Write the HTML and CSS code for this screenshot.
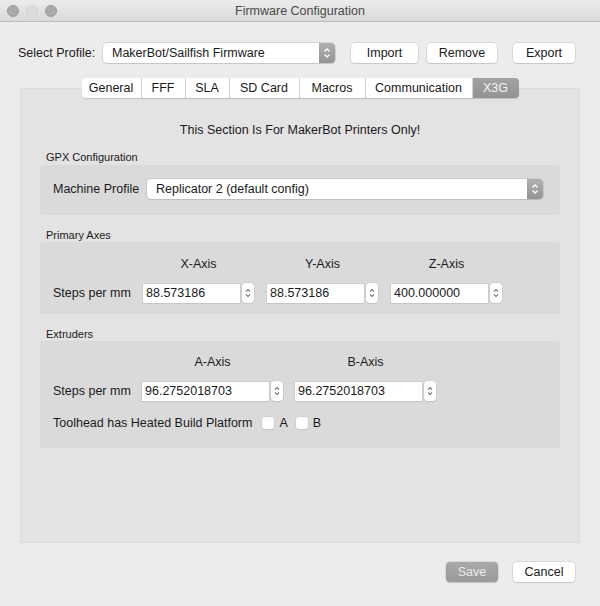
FILE: index.html
```html
<!DOCTYPE html>
<html>
<head>
<meta charset="utf-8">
<title>Firmware Configuration</title>
<link rel="stylesheet" href="styles.css">
</head>
<body>
<div class="window">
  <header class="titlebar">
    <div class="lights"><span class="light"></span><span class="light mid"></span><span class="light"></span></div>
    <div class="title">Firmware Configuration</div>
    <div></div>
  </header>

  <div class="profile-row">
    <span class="lbl">Select Profile:</span>
    <div class="combo profile-combo">
      <span class="combo-text">MakerBot/Sailfish Firmware</span>
      <span class="combo-btn"><svg width="8" height="12" viewBox="0 0 8 12"><path d="M1.5 4.5 L4 2 L6.5 4.5 M1.5 7.5 L4 10 L6.5 7.5" fill="none" stroke="#fff" stroke-width="1.3"/></svg></span>
    </div>
    <button class="btn import">Import</button>
    <button class="btn remove">Remove</button>
    <button class="btn export">Export</button>
  </div>

  <div class="panel">
    <div class="tabs">
      <span class="tab">General</span>
      <span class="tab">FFF</span>
      <span class="tab">SLA</span>
      <span class="tab">SD Card</span>
      <span class="tab">Macros</span>
      <span class="tab">Communication</span>
      <span class="tab active">X3G</span>
    </div>

    <p class="note">This Section Is For MakerBot Printers Only!</p>

    <div class="group-title first">GPX Configuration</div>
    <div class="group gpx">
      <span class="lbl">Machine Profile</span>
      <div class="combo machine-combo">
        <span class="combo-text">Replicator 2 (default config)</span>
        <span class="combo-btn"><svg width="8" height="12" viewBox="0 0 8 12"><path d="M1.5 4.5 L4 2 L6.5 4.5 M1.5 7.5 L4 10 L6.5 7.5" fill="none" stroke="#fff" stroke-width="1.3"/></svg></span>
      </div>
    </div>

    <div class="group-title">Primary Axes</div>
    <div class="group axes primary">
      <span></span>
      <span class="head">X-Axis</span>
      <span class="head">Y-Axis</span>
      <span class="head">Z-Axis</span>
      <span class="lbl">Steps per mm</span>
      <div class="spin"><span class="field">88.573186</span><span class="stepper"><svg width="8" height="12" viewBox="0 0 8 12"><path d="M2 4.5 L4 2.5 L6 4.5 M2 7.5 L4 9.5 L6 7.5" fill="none" stroke="#777" stroke-width="1.1"/></svg></span></div>
      <div class="spin"><span class="field">88.573186</span><span class="stepper"><svg width="8" height="12" viewBox="0 0 8 12"><path d="M2 4.5 L4 2.5 L6 4.5 M2 7.5 L4 9.5 L6 7.5" fill="none" stroke="#777" stroke-width="1.1"/></svg></span></div>
      <div class="spin"><span class="field">400.000000</span><span class="stepper"><svg width="8" height="12" viewBox="0 0 8 12"><path d="M2 4.5 L4 2.5 L6 4.5 M2 7.5 L4 9.5 L6 7.5" fill="none" stroke="#777" stroke-width="1.1"/></svg></span></div>
    </div>

    <div class="group-title">Extruders</div>
    <div class="group extruders">
      <div class="axes ext">
        <span></span>
        <span class="head">A-Axis</span>
        <span class="head">B-Axis</span>
        <span class="lbl">Steps per mm</span>
        <div class="spin"><span class="field">96.2752018703</span><span class="stepper"><svg width="8" height="12" viewBox="0 0 8 12"><path d="M2 4.5 L4 2.5 L6 4.5 M2 7.5 L4 9.5 L6 7.5" fill="none" stroke="#777" stroke-width="1.1"/></svg></span></div>
        <div class="spin"><span class="field">96.2752018703</span><span class="stepper"><svg width="8" height="12" viewBox="0 0 8 12"><path d="M2 4.5 L4 2.5 L6 4.5 M2 7.5 L4 9.5 L6 7.5" fill="none" stroke="#777" stroke-width="1.1"/></svg></span></div>
      </div>
      <div class="check-row">
        <span class="lbl">Toolhead has Heated Build Platform</span>
        <span class="check"></span><span class="ck-lbl">A</span>
        <span class="check"></span><span class="ck-lbl">B</span>
      </div>
    </div>
  </div>

  <div class="footer">
    <button class="btn save">Save</button>
    <button class="btn cancel">Cancel</button>
  </div>
</div>
</body>
</html>
```

FILE: styles.css
```css
* { box-sizing: border-box; }
html, body { margin: 0; padding: 0; }
body {
  background: #ececec;
  font-family: "Liberation Sans", Arial, sans-serif;
  font-size: 12.5px;
  color: #1a1a1a;
  width: 600px;
  height: 606px;
  overflow: hidden;
}
.window { width: 600px; height: 606px; }
.lbl { white-space: nowrap; }

.titlebar {
  height: 22px;
  display: grid;
  grid-template-columns: 1fr auto 1fr;
  align-items: center;
  background: linear-gradient(#ececec, #d9d9d9);
  border-bottom: 1px solid #bdbdbd;
}
.lights { display: flex; gap: 7px; padding-left: 7px; }
.light {
  width: 12px; height: 12px; border-radius: 50%;
  background: #a9a9a9;
  border: 1px solid #9a9a9a;
}
.light.mid { background: #dcdcdc; border-color: #d2d2d2; }
.title { color: #4a4a4a; font-size: 12.5px; }

.profile-row {
  display: flex;
  align-items: center;
  height: 20px;
  margin-top: 21px;
  padding-left: 18px;
}
.profile-row .lbl { width: 85px; }
.combo {
  display: flex;
  align-items: center;
  height: 20px;
  background: #fff;
  border-radius: 4px;
  box-shadow: 0 0 0 0.5px #bcbcbc, 0 1px 1px rgba(0,0,0,0.12);
}
.combo-text { flex: 1; padding-left: 9px; white-space: nowrap; }
.combo-btn {
  width: 16px; height: 20px;
  display: flex; align-items: center; justify-content: center;
  background: linear-gradient(#b0b0b0, #949494);
  border-radius: 0 4px 4px 0;
}
.profile-combo { width: 232px; margin-right: 16px; }

.btn {
  font-family: inherit;
  font-size: 12.5px;
  height: 20px;
  padding: 0;
  border: none;
  background: #fff;
  color: #1a1a1a;
  border-radius: 4px;
  box-shadow: 0 0 0 0.5px #c4c4c4, 0 1px 1px rgba(0,0,0,0.15);
}
.import { width: 67px; margin-right: 9px; }
.remove { width: 70px; margin-right: 16px; }
.export { width: 62px; }

.panel {
  margin: 25px 20px 0;
  height: 455px;
  background: #e3e3e3;
  border: 1px solid #dbdbdb;
}
.tabs {
  display: flex;
  justify-content: center;
  margin-top: -11px;
  height: 20px;
}
.tab {
  display: flex; align-items: center; justify-content: center;
  height: 20px;
  background: #fff;
  border-right: 1px solid #d6d6d6;
  box-shadow: 0 1px 1px rgba(0,0,0,0.15);
}
.tab:first-child { border-radius: 4px 0 0 4px; }
.tab:last-child { border-radius: 0 4px 4px 0; border-right: none; }
.tab:nth-child(1) { width: 60px; }
.tab:nth-child(2) { width: 44px; }
.tab:nth-child(3) { width: 44px; }
.tab:nth-child(4) { width: 70px; }
.tab:nth-child(5) { width: 66px; }
.tab:nth-child(6) { width: 107px; }
.tab:nth-child(7) { width: 46px; }
.tab.active {
  background: linear-gradient(#a2a2a2, #939393);
  color: #f4f4f4;
}

.note {
  margin: 24px 0 0;
  line-height: 16px;
  text-align: center;
}
.group-title {
  margin: 14px 0 0 25px;
  font-size: 11px;
  line-height: 13px;
}
.group-title.first { margin-top: 13px; margin-bottom: 1px; }
.group {
  margin: 0 19px;
  background: #dadada;
  border-radius: 3px;
}
.gpx {
  display: flex;
  align-items: center;
  height: 50px;
  padding: 0 17px 3px 13px;
}
.gpx .lbl { width: 94px; }
.machine-combo { flex: 1; }

.axes {
  display: grid;
  align-items: center;
  column-gap: 13px;
}
.primary {
  grid-template-columns: 77px 111px 111px 111px;
  grid-template-rows: 16px 20px;
  row-gap: 11px;
  height: 72px;
  padding: 14px 0 0 13px;
  align-content: start;
}
.head { text-align: center; line-height: 16px; }
.spin { display: flex; align-items: center; height: 20px; }
.field {
  flex: 1;
  height: 19px;
  line-height: 19px;
  background: #fff;
  padding-left: 3px;
  box-shadow: 0 0 0 0.5px #c0c0c0, 0 1px 0 rgba(0,0,0,0.06);
}
.stepper {
  width: 12px; height: 20px;
  margin-left: 2px;
  display: flex; align-items: center; justify-content: center;
  background: #fff;
  border-radius: 4px;
  box-shadow: 0 0 0 0.5px #c4c4c4, 0 1px 1px rgba(0,0,0,0.12);
}

.extruders {
  height: 107px;
  padding: 13px 0 0 13px;
}
.ext {
  grid-template-columns: 77px 141px 141px;
  grid-template-rows: 16px 20px;
  row-gap: 11px;
  column-gap: 12px;
}
.check-row {
  display: flex;
  align-items: center;
  margin-top: 13px;
  height: 18px;
}
.check-row .lbl { margin-right: 10px; }
.check {
  width: 12px; height: 12px;
  background: #fff;
  border-radius: 3px;
  box-shadow: 0 0 0 0.5px #c4c4c4, 0 1px 1px rgba(0,0,0,0.1);
  margin-right: 5px;
}
.ck-lbl { margin-right: 8px; }

.footer {
  display: flex;
  justify-content: flex-end;
  margin-top: 19px;
  padding-right: 25px;
  gap: 15px;
}
.save {
  width: 52px;
  background: linear-gradient(#a9a9a9, #999);
  color: #ececec;
}
.cancel { width: 62px; }
```
